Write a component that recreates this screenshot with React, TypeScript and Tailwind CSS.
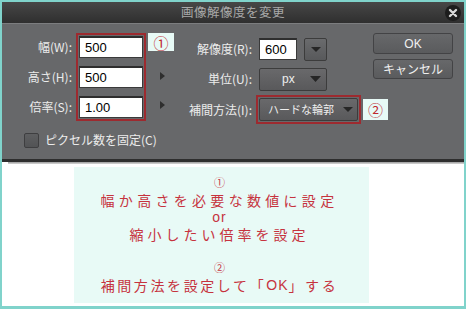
import React from "react";

const jp = { fontFamily: '"Noto Sans CJK JP", "Noto Sans", sans-serif' };
const num = { fontFamily: '"Liberation Sans", Arial, sans-serif' };

function TriRight() {
  return (
    <svg width="5" height="8" viewBox="0 0 5 8">
      <path d="M0 0 L5 4 L0 8 Z" fill="#2e2e2e" />
    </svg>
  );
}

function TriDown({ w = 11, h = 6 }: { w?: number; h?: number }) {
  return (
    <svg width={w} height={h} viewBox={`0 0 ${w} ${h}`}>
      <path d={`M0 0 L${w} 0 L${w / 2} ${h} Z`} fill="#262626" />
    </svg>
  );
}

function Input({ value, w }: { value: string; w: string }) {
  return (
    <div
      className={`${w} shrink-0 h-[22px] bg-white border border-[#3a3a3a] border-t-2 border-t-[#2e2e2e] flex items-center pl-[5px] text-[13px] text-black leading-none`}
      style={num}
    >
      {value}
    </div>
  );
}

export default function App() {
  return (
    <div className="w-[466px] h-[309px] bg-[#80d3cb] pt-[2px] pl-[2px] pr-[2px] pb-[3px]" style={jp}>
      <div className="w-full h-full bg-white flex flex-col">
        {/* Dialog */}
        <div className="flex flex-col">
          {/* Title bar */}
          <div className="relative h-[21px] bg-gradient-to-b from-[#474747] to-[#2f2f2f] flex items-center justify-center">
            <span className="text-[12.5px] text-[#a9a9a9] tracking-[0.5px] leading-none">画像解像度を変更</span>
            <div className="absolute right-[3px] top-[3px] w-[16px] h-[16px] rounded-full bg-[#1d1d1d] flex items-center justify-center">
              <svg width="10" height="10" viewBox="0 0 10 10">
                <path d="M2 2 L8 8 M8 2 L2 8" stroke="#d8d8d8" strokeWidth="2.4" strokeLinecap="round" />
              </svg>
            </div>
          </div>
          <div className="h-[1px] bg-[#7c7d7f]" />
          {/* Body */}
          <div className="h-[135px] bg-[#67686a] flex flex-col text-[12px] text-[#ececec]">
            <div className="flex items-start pt-[9px]">
              {/* Left labels */}
              <div className="w-[72px] shrink-0 flex flex-col pt-[3px] gap-[8px] pr-[2px]">
                <div className="h-[22px] flex items-center justify-end">幅(W):</div>
                <div className="h-[22px] flex items-center justify-end">高さ(H):</div>
                <div className="h-[22px] flex items-center justify-end">倍率(S):</div>
              </div>
              {/* Red box with inputs */}
              <div className="ml-[2px] shrink-0 border-2 border-[#9d2a2f] p-[1px] flex flex-col gap-[8px]">
                <Input value="500" w="w-[64px]" />
                <Input value="500" w="w-[64px]" />
                <Input value="1.00" w="w-[64px]" />
              </div>
              {/* Annotation + triangles */}
              <div className="ml-[2px] w-[26px] shrink-0 flex flex-col items-center">
                <div className="w-[26px] h-[18px] bg-[#e7faf6] flex items-center justify-center text-[#c0282e] text-[15px] leading-none">
                  ①
                </div>
                <div className="mt-[21px] ml-[2px]">
                  <TriRight />
                </div>
                <div className="mt-[21px] ml-[2px]">
                  <TriRight />
                </div>
              </div>
              {/* Right section */}
              <div className="w-[199px] shrink-0 flex flex-col pt-[1px]">
                <div className="h-[30px] flex items-center">
                  <div className="w-[78px] shrink-0 text-right">解像度(R):</div>
                  <div className="ml-[7px] flex items-center">
                    <Input value="600" w="w-[38px]" />
                    <div className="ml-[7px] shrink-0 w-[23px] h-[23px] rounded-[2px] bg-gradient-to-b from-[#6a6b6d] to-[#58595b] border border-[#3c3c3c] flex items-center justify-center">
                      <TriDown w={10} h={5} />
                    </div>
                  </div>
                </div>
                <div className="h-[30px] flex items-center">
                  <div className="w-[78px] shrink-0 text-right">単位(U):</div>
                  <div className="ml-[7px] shrink-0 w-[68px] h-[23px] rounded-[2px] bg-gradient-to-b from-[#69696b] to-[#59595b] border border-[#3c3c3c] flex items-center pl-[22px] pr-[5px]">
                    <span className="text-[12px] text-[#eeeeee] flex-1" style={num}>px</span>
                    <TriDown w={11} h={6} />
                  </div>
                </div>
                <div className="h-[31px] flex items-center">
                  <div className="w-[78px] shrink-0 text-right">補間方法(I):</div>
                  <div className="ml-[4px] shrink-0 border-2 border-[#9d2a2f] p-[1px]">
                    <div className="w-[99px] h-[23px] rounded-[2px] bg-gradient-to-b from-[#69696b] to-[#59595b] border border-[#3c3c3c] flex items-center pl-[8px] pr-[4px]">
                      <span className="flex-1 text-[11px] text-[#eeeeee] leading-none">ハードな輪郭</span>
                      <TriDown w={10} h={5} />
                    </div>
                  </div>
                  <div className="ml-[2px] shrink-0 w-[25px] h-[21px] bg-[#e7faf6] flex items-center justify-center text-[#c0282e] text-[15px] leading-none">
                    ②
                  </div>
                </div>
              </div>
              {/* Buttons */}
              <div className="w-[80px] shrink-0 flex flex-col gap-[5px]">
                <div className="h-[21px] rounded-[3px] bg-gradient-to-b from-[#67686a] to-[#5a5b5d] border border-[#434345] flex items-center justify-center text-[12px] text-[#f0f0f0]" style={num}>
                  OK
                </div>
                <div className="h-[20px] rounded-[3px] bg-gradient-to-b from-[#67686a] to-[#5a5b5d] border border-[#434345] flex items-center justify-center text-[12px] text-[#f0f0f0]">
                  キャンセル
                </div>
              </div>
            </div>
            {/* Checkbox row */}
            <div className="mt-[6px] ml-[22px] flex items-center">
              <div className="w-[15px] h-[15px] rounded-[2px] bg-gradient-to-b from-[#5e5f61] to-[#525355] border border-[#3e3e40]" />
              <span className="ml-[6px]">ピクセル数を固定(C)</span>
            </div>
          </div>
          <div className="h-[3px] bg-[#2e2e2e]" />
          <div className="h-[2px] ml-[6px] bg-gradient-to-b from-[#9a9a9a] to-[#d8d8d8]" />
        </div>
        {/* Note area */}
        <div className="flex-1 flex justify-start pl-[72px] pt-[3px] pb-[3px]">
          <div className="w-[295px] h-full bg-[#e8faf6] flex flex-col items-center pt-[7px] pr-[4px] text-[#c6333e] text-[14px] tracking-[4px]">
            <div className="h-[17px] flex items-center text-[11px] tracking-normal leading-none">①</div>
            <div className="h-[17px] flex items-center leading-none tracking-[4.3px]">幅か高さを必要な数値に設定</div>
            <div className="h-[17px] flex items-center leading-none tracking-[1px]" style={num}>or</div>
            <div className="h-[17px] flex items-center leading-none">縮小したい倍率を設定</div>
            <div className="h-[17px]" />
            <div className="h-[17px] flex items-center text-[11px] tracking-normal leading-none">②</div>
            <div className="h-[17px] flex items-center leading-none tracking-[2.6px]">
              補間方法を設定して「<span className="tracking-[1px]" style={num}>OK</span>」する
            </div>
          </div>
        </div>
      </div>
    </div>
  );
}
